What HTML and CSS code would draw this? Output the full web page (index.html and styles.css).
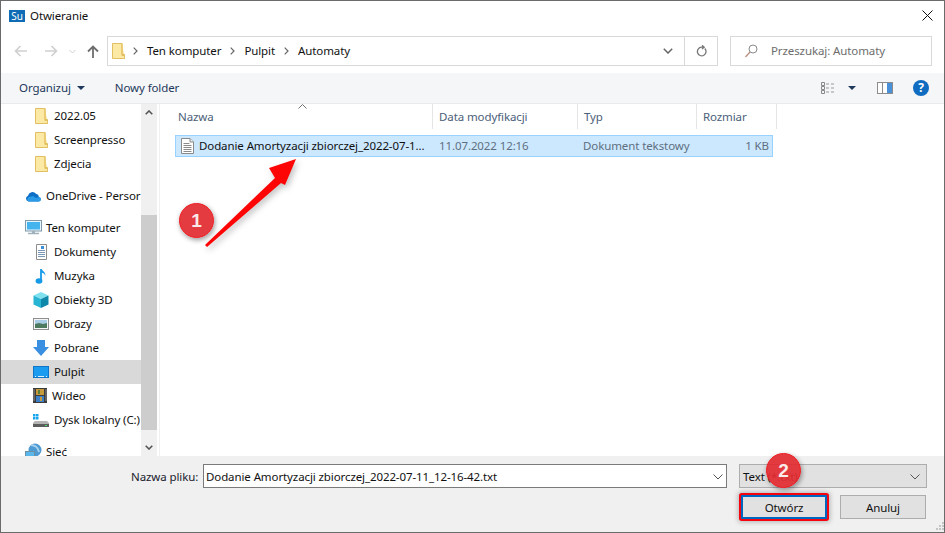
FILE: index.html
```html
<!DOCTYPE html>
<html lang="pl">
<head>
<meta charset="utf-8">
<title>Otwieranie</title>
<link rel="stylesheet" href="styles.css">
</head>
<body>
<svg class="defs" width="0" height="0" aria-hidden="true">
  <symbol id="folder" viewBox="0 0 13 16">
    <path d="M.5.500H10V12.500H12.500V15.500H.5Z" fill="#fde9a6" stroke="#e3bf63"/>
    <path d="M10 .5V11.500H12.500V15.500" fill="#f7d87c" stroke="#e3bf63"/>
  </symbol>
</svg>
<div class="page">
  <div class="window">
    <header class="titlebar">
      <span class="logo">Su</span>
      <span class="title">Otwieranie</span>
      <svg class="close" width="11" height="11" viewBox="0 0 11 11"><path d="M.5.500l10 10M10.500.500l-10 10" stroke="#111" fill="none"/></svg>
    </header>

    <nav class="navbar">
      <div class="navbtns">
        <svg width="14" height="12" viewBox="0 0 14 12"><path d="M13 6H2M6.500 1L1.500 6l5 5" stroke="#cfcfcf" stroke-width="1.600" fill="none"/></svg>
        <svg width="14" height="12" viewBox="0 0 14 12"><path d="M1 6h11M7.500 1l5 5-5 5" stroke="#cfcfcf" stroke-width="1.600" fill="none"/></svg>
        <svg width="7" height="5" viewBox="0 0 7 5"><path d="M.5 1l3 3 3-3" stroke="#cfcfcf" fill="none"/></svg>
        <svg width="12" height="13" viewBox="0 0 12 13"><path d="M6 13V2M1 6.500l5-5 5 5" stroke="#6e6e6e" stroke-width="1.800" fill="none"/></svg>
      </div>
      <div class="address">
        <svg class="addr-folder" width="13" height="16"><use href="#folder"/></svg>
        <svg class="crumb" width="5" height="8" viewBox="0 0 5 8"><path d="M.7.700L4 4 .7 7.300" stroke="#666" stroke-width="1.200" fill="none"/></svg>
        <span>Ten komputer</span>
        <svg class="crumb" width="5" height="8" viewBox="0 0 5 8"><path d="M.7.700L4 4 .7 7.300" stroke="#666" stroke-width="1.200" fill="none"/></svg>
        <span>Pulpit</span>
        <svg class="crumb" width="5" height="8" viewBox="0 0 5 8"><path d="M.7.700L4 4 .7 7.300" stroke="#666" stroke-width="1.200" fill="none"/></svg>
        <span>Automaty</span>
        <span class="addr-spacer"></span>
        <span class="addr-drop"><svg width="10" height="6" viewBox="0 0 10 6"><path d="M.8.800L5 5 9.200.8" stroke="#666" stroke-width="1.500" fill="none"/></svg></span>
        <span class="addr-refresh"><svg width="11" height="12" viewBox="0 0 11 12"><path d="M8.800 3.500A4.300 4.300 0 1 1 5.500 2.200H8M6 .3L8.200 2.200 6 4" stroke="#777" stroke-width="1.300" fill="none"/></svg></span>
      </div>
      <div class="search">
        <svg width="13" height="14" viewBox="0 0 13 14"><circle cx="8" cy="5" r="4" stroke="#8a8a8a" fill="none"/><path d="M5 8l-4.500 5" stroke="#b98f7e" stroke-width="1.200"/></svg>
        <span>Przeszukaj: Automaty</span>
      </div>
    </nav>

    <div class="toolbar">
      <span class="tool">Organizuj</span>
      <span class="caret"></span>
      <span class="tool newfolder">Nowy folder</span>
      <span class="tool-spacer"></span>
      <svg class="views" width="16" height="12" viewBox="0 0 16 12"><path d="M.5.500h3v3h-3zM.5 4.500h3v3h-3zM.5 8.500h3v3h-3z" fill="none" stroke="#888"/><path d="M5 2h3M10 2h3M5 6h3M10 6h3M5 10h3M10 10h3" stroke="#999"/></svg>
      <span class="caret small"></span>
      <svg class="pane" width="16" height="12" viewBox="0 0 16 12"><rect x=".5" y=".5" width="15" height="11" fill="#fff" stroke="#8c8c8c"/><path d="M5.500 0v12" stroke="#8c8c8c"/><rect x="10" y="1" width="5" height="10" fill="#4a90d9"/></svg>
      <span class="help">?</span>
    </div>

    <main class="main">
      <aside class="sidebar">
        <ul class="tree">
          <li class="row sub"><svg width="13" height="16"><use href="#folder"/></svg>2022.05</li>
          <li class="row sub"><svg width="13" height="16"><use href="#folder"/></svg>Screenpresso</li>
          <li class="row sub"><svg width="13" height="16"><use href="#folder"/></svg>Zdjecia</li>
          <li class="row top gap"><svg width="17" height="12" viewBox="0 0 17 12"><path d="M3.500 11.500A3 3 0 0 1 3 5.700 4.500 4.500 0 0 1 11 3.800a3.800 3.800 0 0 1 3 3.200 2.300 2.300 0 0 1 0 4.500z" fill="#0d6fc6"/><path d="M3.500 11.500A2.500 2.500 0 0 1 4 7l4-1 3 2 3-1a2.300 2.300 0 0 1 0 4.500z" fill="#2b9be8"/></svg>OneDrive - Persor</li>
          <li class="row top gap"><svg width="17" height="15" viewBox="0 0 17 15"><rect x=".5" y=".5" width="16" height="10.500" fill="#e8f6fd" stroke="#7f98a8"/><rect x="2" y="2" width="13" height="7.500" fill="#45b4ee"/><path d="M7 11h3v2H7z" fill="#9fb1bd"/><path d="M3 13.500h11" stroke="#9fb1bd" stroke-width="1.500"/></svg>Ten komputer</li>
          <li class="row sub"><svg width="13" height="16" viewBox="0 0 13 16"><path d="M1.500.500h10v15h-10z" fill="#fff" stroke="#8d8d8d"/><path d="M3 6.500h7M3 8.500h7M3 10.500h7M3 12.500h7" stroke="#7a98b5"/><path d="M6 2h3v3H6z" fill="#3a8fd8"/></svg>Dokumenty</li>
          <li class="row sub"><svg width="13" height="16" viewBox="0 0 13 16"><path d="M6 1v11.500" stroke="#159ae8" stroke-width="1.800"/><ellipse cx="4" cy="13" rx="3.400" ry="2.700" fill="#159ae8"/><path d="M6.500 1c1 2.500 5 3 3.500 7.500C10.300 5.500 8 5 6.500 4.500z" fill="#159ae8"/></svg>Muzyka</li>
          <li class="row sub obj"><svg width="16" height="16" viewBox="0 0 16 16"><path d="M8 0l7.500 3.500-7.500 3.500L.5 3.500z" fill="#7fe0ee"/><path d="M.5 3.500L8 7v9L.5 12.500z" fill="#27b5d3"/><path d="M15.500 3.500L8 7v9l7.500-3.500z" fill="#0f87a8"/></svg>Obiekty 3D</li>
          <li class="row sub obj"><svg width="16" height="12" viewBox="0 0 16 12"><rect x=".5" y=".5" width="15" height="11" fill="#f5f5f5" stroke="#8e8e8e"/><rect x="2" y="2" width="12" height="4" fill="#a8cbe6"/><path d="M2 6l4-1 4 1 4-1v5H2z" fill="#4d7a5f"/></svg>Obrazy</li>
          <li class="row sub obj"><svg width="16" height="16" viewBox="0 0 16 16"><path d="M4 0h8v7h4l-8 9-8-9h4z" fill="#3a8fe0"/></svg>Pobrane</li>
          <li class="row sub obj active"><svg width="16" height="12" viewBox="0 0 16 12"><rect x=".5" y=".5" width="15" height="11" fill="#1c9cf0" stroke="#1276c8"/><path d="M2 10.500h1M5 10.500h6M13 10.500h1" stroke="#dff2ff"/></svg>Pulpit</li>
          <li class="row sub obj"><svg width="14" height="15" viewBox="0 0 14 15"><rect width="14" height="15" fill="#3b3b3b"/><rect x="3" y="1" width="8" height="6" fill="#c79b3b"/><path d="M5 2h2v4H5z" fill="#5a7d3a"/><rect x="3" y="8" width="8" height="6" fill="#3c7fc4"/><path d="M7 9h2v4H7z" fill="#c79b3b"/><path d="M1 1.500v12M13 1.500v12" stroke="#ddd" stroke-dasharray="1 1" fill="none"/></svg>Wideo</li>
          <li class="row sub obj"><svg width="16" height="14" viewBox="0 0 16 14"><path d="M0 1h2.500v2.500H0zM3 1h2.500v2.500H3zM0 4h2.500v2.500H0zM3 4h2.500v2.500H3z" fill="#17a3ee"/><path d="M2 8h12l2 2v4H0v-4z" fill="#b5b5b5"/><path d="M0 11h16v3H0z" fill="#5d5d5d"/><path d="M12 12h2v1h-2z" fill="#46e06a"/></svg>Dysk lokalny (C:)</li>
          <li class="row top gap"><svg width="17" height="17" viewBox="0 0 17 17"><circle cx="10" cy="7" r="6.500" fill="#4e9ad3"/><path d="M6 2c3 0 7 2 8 7" stroke="#a8d3ee" fill="none" stroke-width="2"/><rect x=".5" y="8.500" width="9" height="7" fill="#59b7ec" stroke="#6f8fa3"/></svg>Sieć</li>
        </ul>
      </aside>
      <div class="scrollbar">
        <svg width="8" height="5" viewBox="0 0 8 5"><path d="M.7 4.300L4 1l3.300 3.300" stroke="#555" stroke-width="1.600" fill="none"/></svg>
        <div class="track"><div class="thumb"></div></div>
        <svg width="8" height="5" viewBox="0 0 8 5"><path d="M.7.700L4 4 7.300.7" stroke="#555" stroke-width="1.600" fill="none"/></svg>
      </div>
      <section class="files">
        <div class="heads">
          <div class="head h-name">Nazwa<svg class="sort" width="9" height="5" viewBox="0 0 9 5"><path d="M.5 4.500l4-4 4 4" stroke="#777" fill="none"/></svg></div>
          <div class="head h-date">Data modyfikacji</div>
          <div class="head h-type">Typ</div>
          <div class="head h-size">Rozmiar</div>
        </div>
        <div class="file">
          <span class="fname"><svg width="13" height="16" viewBox="0 0 13 16"><path d="M.5.500h8.500l3.500 3.500v11.500H.5z" fill="#fff" stroke="#8a8a8a"/><path d="M9 .5V4h3.500" fill="#eee" stroke="#8a8a8a"/><path d="M2.500 5.500h6M2.500 7.500h8M2.500 9.500h8M2.500 11.500h8M2.500 13.500h8" stroke="#8a8a8a"/></svg>Dodanie Amortyzacji zbiorczej_2022-07-1...</span>
          <span class="fdate">11.07.2022 12:16</span>
          <span class="ftype">Dokument tekstowy</span>
          <span class="fsize">1 KB</span>
        </div>
      </section>
    </main>

    <footer class="footer">
      <div class="footrow">
        <label class="fname-label" for="fname">Nazwa pliku:</label>
        <div class="input"><span class="input-text" id="fname">Dodanie Amortyzacji zbiorczej_2022-07-11_12-16-42.txt</span><svg width="10" height="6" viewBox="0 0 10 6"><path d="M.5.500L5 5 9.500.5" stroke="#555" fill="none"/></svg></div>
        <div class="combo"><span>Text (*.txt)</span><svg width="10" height="6" viewBox="0 0 10 6"><path d="M.5.500L5 5 9.500.5" stroke="#555" fill="none"/></svg></div>
      </div>
      <div class="footrow buttons">
        <div class="btn primary">Otwórz</div>
        <div class="btn">Anuluj</div>
      </div>
      <svg class="grip" width="8" height="8" viewBox="0 0 8 8"><path d="M6 0h2v2H6zM3 3h2v2H3zM6 3h2v2H6zM0 6h2v2H0zM3 6h2v2H3zM6 6h2v2H6z" fill="#c4c4c4"/></svg>
    </footer>
  </div>

  <svg class="arrow" width="945" height="533" viewBox="0 0 945 533"><polygon points="205,245 275,178 269,168 296,159 285,185 281,183 207,247" fill="#fe0505"/></svg>
  <div class="badge one">1</div>
  <div class="badge two">2</div>
</div>
</body>
</html>
```
FILE: styles.css
```css
* { box-sizing: border-box; }
html, body { margin: 0; padding: 0; background: #fff; }
body { font: 11.5px/16px "Noto Sans", "Open Sans", sans-serif; letter-spacing: -.1px; color: #111; overflow: hidden; }
.defs { position: absolute; }
svg { display: block; flex: none; }
.page { position: relative; width: 945px; height: 533px; }
.window { width: 945px; height: 533px; border: 1px solid #6b6b6b; display: flex; flex-direction: column; background: #fff; overflow: hidden; }

.titlebar { height: 29px; display: flex; align-items: center; padding: 0 11px 0 8px; flex: none; }
.logo { width: 16px; height: 12px; background: #0f6cb4; color: #fff; font-size: 10px; line-height: 12px; text-align: center; margin-right: 5px; }
.title { flex: 1; margin-top: 1px; }

.navbar { height: 43px; flex: none; display: flex; align-items: center; padding: 0 12px 1px 0; }
.navbtns { width: 106px; display: flex; align-items: center; padding-left: 13px; }
.navbtns svg:nth-child(2) { margin-left: 16px; }
.navbtns svg:nth-child(3) { margin-left: 11px; }
.navbtns svg:nth-child(4) { margin-left: 11px; }
.address { width: 611px; height: 30px; border: 1px solid #d9d9d9; display: flex; align-items: center; padding-left: 4px; }
.addr-folder { margin-right: 8px; }
.address .crumb { margin-right: 9px; }
.address span { margin-right: 9px; }
.address .addr-spacer { flex: 1; margin: 0; }
.addr-drop { width: 33px; height: 28px; margin: 0 !important; display: flex; align-items: center; justify-content: center; }
.addr-refresh { width: 33px; height: 28px; margin: 0 !important; border-left: 1px solid #d9d9d9; display: flex; align-items: center; justify-content: center; }
.search { width: 202px; height: 30px; margin-left: 12px; border: 1px solid #d9d9d9; display: flex; align-items: center; padding-left: 14px; color: #6d6d6d; }
.search span { margin-left: 13px; }

.toolbar { height: 30px; flex: none; background: #f5f6f7; display: flex; align-items: center; padding: 0 15px 0 18px; color: #1e395b; }
.caret { width: 0; height: 0; border: 4px solid transparent; border-top: 4px solid #1e395b; border-bottom: 0; margin-left: 6px; }
.newfolder { margin-left: 30px; }
.tool-spacer { flex: 1; }
.caret.small { border-width: 4px; margin-left: 11px; }
.pane { margin-left: 21px; }
.help { width: 16px; height: 16px; border-radius: 50%; margin-left: 20px; background: #0f6cc0; color: #fff; font: bold 12px/16px "Noto Sans", sans-serif; text-align: center; }

.main { height: 353px; flex: none; display: flex; border-top: 1px solid #eaeaea; overflow: hidden; }
.sidebar { width: 140px; flex: none; overflow: hidden; }
.tree { list-style: none; margin: 0; padding: 0; }
.row { height: 24px; width: 140px; display: flex; align-items: center; white-space: nowrap; overflow: hidden; padding-bottom: 1px; }
.row.sub { padding-left: 34px; }
.row.sub svg { margin-right: 6px; }
.row.sub.obj { padding-left: 32px; }
.row.sub.obj svg { margin-right: 5px; }
.row.top { padding-left: 24px; }
.row.top svg { margin-right: 4px; }
.row.gap { margin-top: 8px; }
.row.active { background: #d9d9d9; }
.scrollbar { width: 16px; flex: none; background: #f0f0f0; display: flex; flex-direction: column; align-items: center; padding-top: 6px; padding-bottom: 6px; }
.track { flex: 1; width: 16px; padding-top: 94px; margin: 6px 0; }
.thumb { height: 215px; background: #cdcdcd; }
.files { flex: 1; margin-left: 2px; border-left: 1px solid #f0f0f0; position: relative; }
.heads { display: flex; height: 25px; color: #4c607a; }
.head { height: 25px; border-right: 1px solid #e5e5e5; padding-left: 6px; display: flex; align-items: center; }
.h-name { width: 273px; padding-left: 18px; position: relative; }
.h-date { width: 145px; }
.h-type { width: 119px; }
.h-size { width: 80px; }
.sort { position: absolute; left: 138px; top: 0; }
.file { margin: 6px 0 0 15px; width: 598px; height: 22px; background: #cce8ff; border: 1px solid #99d1ff; display: grid; grid-template-columns: 263px 144px 1fr 60px; align-items: center; }
.fname { display: flex; align-items: center; padding-left: 5px; white-space: nowrap; }
.fname svg { margin-right: 5px; }
.fdate, .ftype, .fsize { color: #5f6f80; }
.fsize { text-align: right; padding-right: 3px; }

.footer { flex: 1; background: #f0f0f0; position: relative; padding-top: 8px; }
.footrow { display: flex; align-items: flex-start; }
.fname-label { margin-left: 130px; width: 72px; line-height: 25px; color: #1a1a2e; }
.input { width: 524px; height: 24px; background: #fff; border: 1px solid #7a7a7a; display: flex; align-items: center; padding: 1px 3px 0 2px; }
.input-text { flex: 1; white-space: nowrap; }
.combo { width: 188px; height: 24px; margin-left: 12px; background: #e1e1e1; border: 1px solid #adadad; display: flex; align-items: center; justify-content: space-between; padding: 1px 6px 0 3px; }
.buttons { margin-top: 6px; margin-left: 740px; gap: 13px; }
.btn { width: 86px; height: 24px; background: #e1e1e1; border: 1px solid #adadad; text-align: center; line-height: 23px; }
.btn.primary { border: 2px solid #0067c0; border-radius: 1px; box-shadow: 0 0 0 2px #f5030f, 0 0 5px 3px rgba(0,0,0,.25); line-height: 21px; }
.grip { position: absolute; right: 0; bottom: 2px; }

.arrow { position: absolute; left: 0; top: 0; pointer-events: none; filter: drop-shadow(2px 3px 3px rgba(0,0,0,.25)); }
.badge { position: absolute; width: 35px; height: 35px; border-radius: 50%; background: rgba(226,44,50,.93); border: 1px solid #ee1c22; color: #fbeaea; font: bold 19px/33px "Liberation Sans", sans-serif; text-align: center; box-shadow: 1px 2px 5px rgba(0,0,0,.4); }
.badge.one { left: 179px; top: 203px; }
.badge.two { left: 766px; top: 453px; }
```
